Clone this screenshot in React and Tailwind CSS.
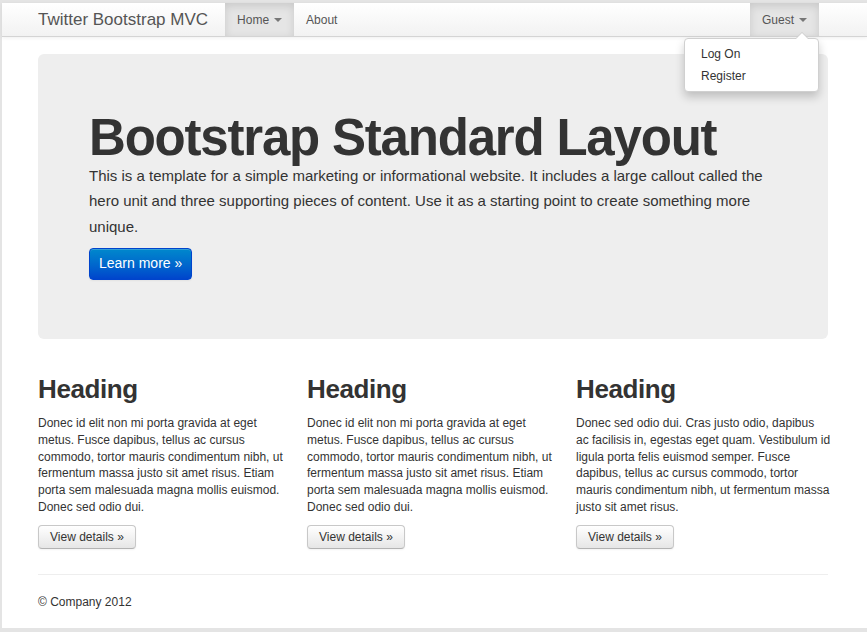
import React from "react";

const font = { fontFamily: '"Liberation Sans", Arial, sans-serif' };

function Caret() {
  return (
    <span className="ml-[5px] inline-block h-0 w-0 border-x-[4px] border-t-[4px] border-x-transparent border-t-[#777] align-middle" />
  );
}

function Col({ lines }) {
  return (
    <div>
      <h2 className="m-0 text-[26px] font-bold leading-[40px] tracking-[-0.4px] text-[#333]">Heading</h2>
      <p className="mt-[6px] whitespace-nowrap text-[12px] leading-[16.8px] text-[#333]">
        {lines.map((l, i) => (
          <React.Fragment key={i}>
            {l}
            {i < lines.length - 1 && <br />}
          </React.Fragment>
        ))}
      </p>
      <button className="mt-[9px] h-[24px] rounded-[4px] border border-[#c8c8c8] border-b-[#b3b3b3] bg-gradient-to-b from-white to-[#e6e6e6] px-[11px] text-[12px] leading-[22px] text-[#333] shadow-[inset_0_1px_0_rgba(255,255,255,0.2),0_1px_2px_rgba(0,0,0,0.05)]">
        View details »
      </button>
    </div>
  );
}

const colA = [
  "Donec id elit non mi porta gravida at eget",
  "metus. Fusce dapibus, tellus ac cursus",
  "commodo, tortor mauris condimentum nibh, ut",
  "fermentum massa justo sit amet risus. Etiam",
  "porta sem malesuada magna mollis euismod.",
  "Donec sed odio dui.",
];

const colB = [
  "Donec sed odio dui. Cras justo odio, dapibus",
  "ac facilisis in, egestas eget quam. Vestibulum id",
  "ligula porta felis euismod semper. Fusce",
  "dapibus, tellus ac cursus commodo, tortor",
  "mauris condimentum nibh, ut fermentum massa",
  "justo sit amet risus.",
];

export default function App() {
  return (
    <div style={font} className="h-[632px] w-[867px] overflow-hidden bg-[#e4e4e4] pl-[2px] pt-[3px] pb-[4px]">
      <div className="relative h-full w-full bg-white">
        {/* navbar */}
        <div className="h-[34px] border-b border-[#d4d4d4] bg-gradient-to-b from-white to-[#f2f2f2] shadow-[0_1px_4px_rgba(0,0,0,0.065)]">
          <div className="ml-[36px] flex h-[33px] w-[781px] items-stretch">
            <a className="flex items-center pr-[17px] text-[17px] text-[#555]">Twitter Bootstrap MVC</a>
            <a className="flex items-center bg-[#e5e5e5] px-[12px] text-[12px] text-[#555] shadow-[inset_0_3px_8px_rgba(0,0,0,0.125)]">
              Home
              <Caret />
            </a>
            <a className="flex items-center px-[12px] text-[12px] text-[#555]">About</a>
            <div className="flex-1" />
            <a className="flex items-center bg-[#e5e5e5] px-[12px] text-[12px] text-[#555] shadow-[inset_0_3px_8px_rgba(0,0,0,0.125)]">
              Guest
              <Caret />
            </a>
          </div>
        </div>

        {/* dropdown */}
        <div className="absolute left-[682px] top-[35px] z-10 w-[135px] rounded-[4px] border border-[#d0d0d0] bg-white py-[4px] shadow-[0_5px_10px_rgba(0,0,0,0.2)]">
          <div className="absolute -top-[7px] right-[9px] h-0 w-0 border-x-[7px] border-b-[7px] border-x-transparent border-b-[#ccc]" />
          <div className="absolute -top-[6px] right-[10px] h-0 w-0 border-x-[6px] border-b-[6px] border-x-transparent border-b-white" />
          <div className="px-[16px] text-[12px] leading-[22px] text-[#333]">Log On</div>
          <div className="px-[16px] text-[12px] leading-[22px] text-[#333]">Register</div>
        </div>

        <div className="ml-[36px] w-[790px]">
          {/* hero */}
          <div className="mt-[17px] h-[285px] rounded-[6px] bg-[#eeeeee] px-[51px] pt-[60px]">
            <h1 className="m-0 text-[51px] font-bold leading-[47px] tracking-[-1.2px] text-[#333]">
              Bootstrap Standard Layout
            </h1>
            <p className="mt-[2px] text-[15px] leading-[25.3px] text-[#333]">
              This is a template for a simple marketing or informational website. It includes a large callout called the hero unit and three supporting pieces of content. Use it as a starting point to create something more unique.
            </p>
            <button className="mt-[9px] h-[32px] rounded-[4px] border border-[#0044cc] bg-gradient-to-b from-[#0088cc] to-[#0044cc] px-[9px] text-[14px] text-white shadow-[inset_0_1px_0_rgba(255,255,255,0.2),0_1px_2px_rgba(0,0,0,0.05)]">
              Learn more »
            </button>
          </div>

          {/* columns */}
          <div className="mt-[30px] grid grid-cols-[258px_258px_258px] gap-x-[11px]">
            <Col lines={colA} />
            <Col lines={colA} />
            <Col lines={colB} />
          </div>

          <div className="mt-[25px] border-t border-[#eeeeee]" />
          <p className="mt-[19px] text-[12px] leading-[17px] text-[#333]">© Company 2012</p>
        </div>
      </div>
    </div>
  );
}
